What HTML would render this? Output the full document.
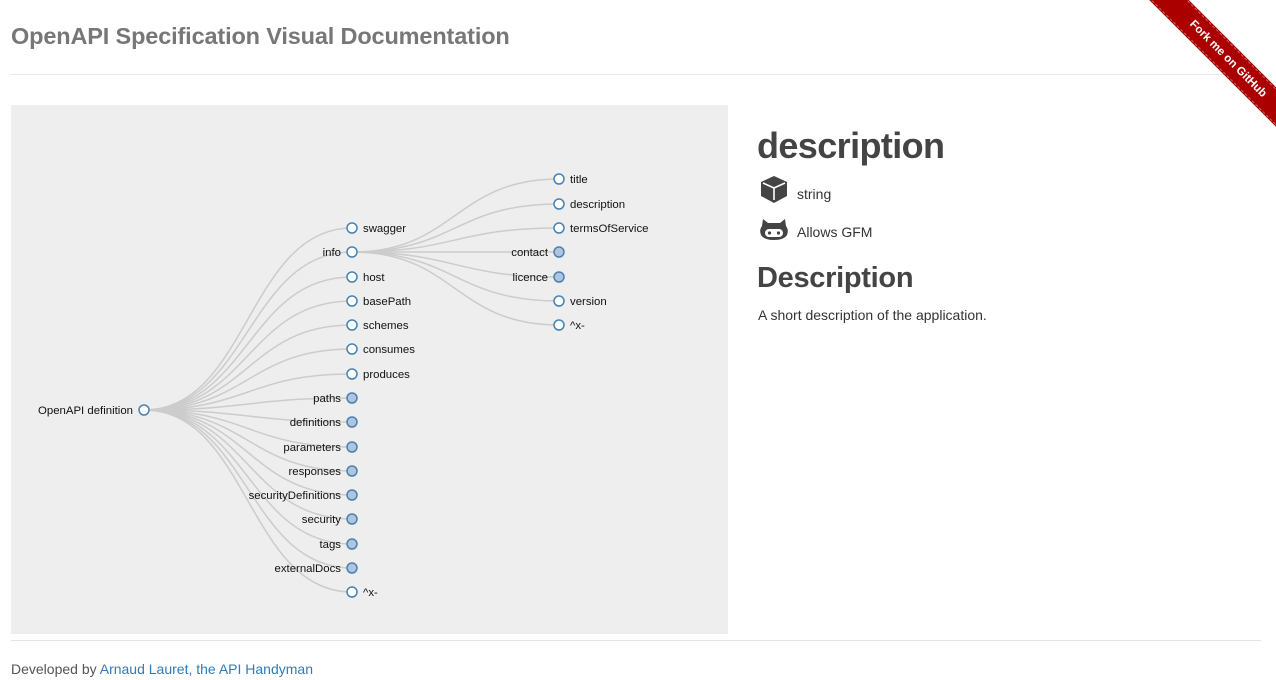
<!DOCTYPE html>
<html><head><meta charset="utf-8"><style>
body{margin:0;width:1276px;height:680px;overflow:hidden;background:#fff;font-family:"Liberation Sans",Arial,sans-serif;color:#333;position:relative}
.t{position:absolute;left:11px;top:23px;font-size:23.5px;font-weight:bold;color:#777;letter-spacing:-0.15px}
.hr1{position:absolute;left:11px;right:15px;top:74px;border-top:1px solid #e5e5e5}
.hr2{position:absolute;left:11px;right:15px;top:640px;border-top:1px solid #e5e5e5}
.panel{position:absolute;left:11px;top:105px;width:717px;height:529px;background:#eee}
svg.tree{position:absolute;left:0;top:0}
.h1{position:absolute;left:757px;top:125px;font-size:36px;font-weight:bold;color:#444;letter-spacing:-0.6px}
.row{position:absolute;left:761px;font-size:14px;color:#333}
.h2{position:absolute;left:757px;top:262px;font-size:29px;font-weight:bold;color:#444;letter-spacing:-0.3px}
.p{position:absolute;left:758px;top:307px;font-size:14px}
.foot{position:absolute;left:11px;top:661px;font-size:14px;color:#555}
.foot a{color:#337ab7;text-decoration:none}
.rib{position:absolute;left:1128px;top:46px;width:200px;height:24px;background:#a00;transform:rotate(45deg);color:#fff;font-size:11.5px;font-weight:bold;text-align:center;line-height:24px;box-shadow:0 0 0 1px #a00;border-top:1px dashed rgba(255,255,255,.4);border-bottom:1px dashed rgba(255,255,255,.4)}
</style></head><body>
<div class="t">OpenAPI Specification Visual Documentation</div>
<div class="hr1"></div>
<div class="panel"></div>
<svg class="tree" width="1276" height="680" font-family="Liberation Sans, Arial, sans-serif" font-size="11.4">
<g fill="none" stroke="#ccc" stroke-width="1.5">
<path d="M144 410C248 410 248 228 352 228"/><path d="M144 410C248 410 248 252 352 252"/>
<path d="M144 410C248 410 248 277 352 277"/><path d="M144 410C248 410 248 301 352 301"/>
<path d="M144 410C248 410 248 325 352 325"/><path d="M144 410C248 410 248 349 352 349"/>
<path d="M144 410C248 410 248 374 352 374"/><path d="M144 410C248 410 248 398 352 398"/>
<path d="M144 410C248 410 248 422 352 422"/><path d="M144 410C248 410 248 447 352 447"/>
<path d="M144 410C248 410 248 471 352 471"/><path d="M144 410C248 410 248 495 352 495"/>
<path d="M144 410C248 410 248 519 352 519"/><path d="M144 410C248 410 248 544 352 544"/>
<path d="M144 410C248 410 248 568 352 568"/><path d="M144 410C248 410 248 592 352 592"/>
<path d="M352 252C455 252 455 179 559 179"/><path d="M352 252C455 252 455 204 559 204"/>
<path d="M352 252C455 252 455 228 559 228"/><path d="M352 252C455 252 455 252 559 252"/>
<path d="M352 252C455 252 455 277 559 277"/><path d="M352 252C455 252 455 301 559 301"/>
<path d="M352 252C455 252 455 325 559 325"/>
</g>
<g stroke="#4682b4" stroke-width="1.5">
<circle cx="144" cy="410" r="5" fill="#fff"/>
<circle cx="352" cy="228" r="5" fill="#fff"/><circle cx="352" cy="252" r="5" fill="#fff"/>
<circle cx="352" cy="277" r="5" fill="#fff"/><circle cx="352" cy="301" r="5" fill="#fff"/>
<circle cx="352" cy="325" r="5" fill="#fff"/><circle cx="352" cy="349" r="5" fill="#fff"/>
<circle cx="352" cy="374" r="5" fill="#fff"/>
<circle cx="352" cy="398" r="5" fill="#b0c4de"/><circle cx="352" cy="422" r="5" fill="#b0c4de"/>
<circle cx="352" cy="447" r="5" fill="#b0c4de"/><circle cx="352" cy="471" r="5" fill="#b0c4de"/>
<circle cx="352" cy="495" r="5" fill="#b0c4de"/><circle cx="352" cy="519" r="5" fill="#b0c4de"/>
<circle cx="352" cy="544" r="5" fill="#b0c4de"/><circle cx="352" cy="568" r="5" fill="#b0c4de"/>
<circle cx="352" cy="592" r="5" fill="#fff"/>
<circle cx="559" cy="179" r="5" fill="#fff"/><circle cx="559" cy="204" r="5" fill="#fff"/>
<circle cx="559" cy="228" r="5" fill="#fff"/><circle cx="559" cy="252" r="5" fill="#b0c4de"/>
<circle cx="559" cy="277" r="5" fill="#b0c4de"/><circle cx="559" cy="301" r="5" fill="#fff"/>
<circle cx="559" cy="325" r="5" fill="#fff"/>
</g>
<g fill="#111">
<text x="133" y="414" text-anchor="end">OpenAPI definition</text>
<text x="363" y="232">swagger</text><text x="341" y="256" text-anchor="end">info</text>
<text x="363" y="281">host</text><text x="363" y="305">basePath</text>
<text x="363" y="329">schemes</text><text x="363" y="353">consumes</text>
<text x="363" y="378">produces</text>
<text x="341" y="402" text-anchor="end">paths</text><text x="341" y="426" text-anchor="end">definitions</text>
<text x="341" y="451" text-anchor="end">parameters</text><text x="341" y="475" text-anchor="end">responses</text>
<text x="341" y="499" text-anchor="end">securityDefinitions</text><text x="341" y="523" text-anchor="end">security</text>
<text x="341" y="548" text-anchor="end">tags</text><text x="341" y="572" text-anchor="end">externalDocs</text>
<text x="363" y="596">^x-</text>
<text x="570" y="183">title</text><text x="570" y="208">description</text>
<text x="570" y="232">termsOfService</text><text x="548" y="256" text-anchor="end">contact</text>
<text x="548" y="281" text-anchor="end">licence</text><text x="570" y="305">version</text>
<text x="570" y="329">^x-</text>
</g>
<g fill="#444">
<path d="M774 176L787 182V196L774 203L761 196V182Z"/>
</g>
<path d="M763 183L774 188L785 183M774 188V200" stroke="#fff" stroke-width="1.6" fill="none"/>
<g fill="#444">
<path d="M763 219L768 223H780L785 219L786 226Q789 230 787 235Q784 240 774 240Q764 240 761 235Q759 230 762 226Z"/>
</g>
<rect x="765" y="229" width="18" height="8" rx="4" fill="#fff"/>
<circle cx="769.5" cy="233" r="1.6" fill="#444"/><circle cx="778.5" cy="233" r="1.6" fill="#444"/>
</svg>
<div class="h1">description</div>
<div class="row" style="left:797px;top:186px">string</div>
<div class="row" style="left:797px;top:224px">Allows GFM</div>
<div class="h2">Description</div>
<div class="p">A short description of the application.</div>
<div class="hr2"></div>
<div class="foot">Developed by <a>Arnaud Lauret, the API Handyman</a></div>
<div class="rib">Fork me on GitHub</div>
</body></html>
